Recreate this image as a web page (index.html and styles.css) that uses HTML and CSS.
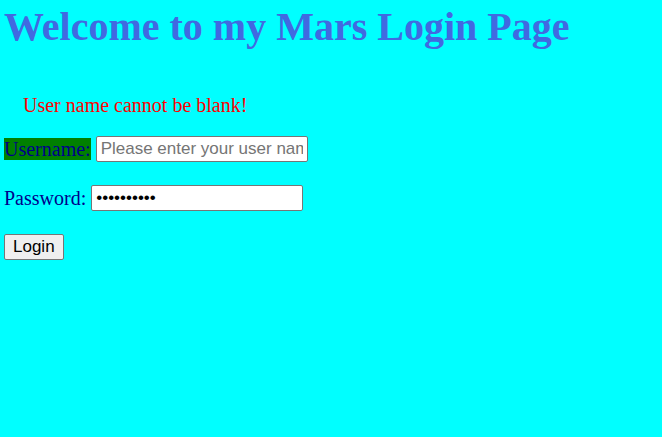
FILE: index.html
```html
<!DOCTYPE html>
<html>
<head>
<meta charset="utf-8">
<link rel="stylesheet" href="styles.css">
</head>
<body>
<h1 class="title">Welcome to my Mars Login Page</h1>
<form class="login">
  <div class="error">User name cannot be blank!</div>
  <div class="row row-first">
    <label class="label label-user" for="u">Username:</label>
    <input class="field field-user" id="u" type="text" placeholder="Please enter your user name">
  </div>
  <div class="row">
    <label class="label" for="p">Password:</label>
    <input class="field" id="p" type="password" value="1234567890">
  </div>
  <div class="row">
    <button class="btn" type="button">Login</button>
  </div>
</form>
</body>
</html>
```
FILE: styles.css
```css
html, body {
  background: #00ffff;
}
body {
  margin: 0;
  padding: 0 4px;
  font-family: "Liberation Serif", "Times New Roman", serif;
}
.title {
  margin: 0;
  padding-top: 4px;
  font-size: 40px;
  line-height: 46px;
  font-weight: bold;
  color: #4169e1;
}
.login {
  display: flex;
  flex-direction: column;
}
.error {
  margin: 44px 0 0 19px;
  font-size: 20px;
  line-height: 23px;
  color: #ff0000;
}
.row {
  display: flex;
  align-items: center;
  gap: 5px;
  height: 26px;
  margin-top: 23px;
}
.row-first {
  margin-top: 19px;
}
.label {
  font-size: 20px;
  line-height: 22px;
  color: #00008b;
}
.label-user {
  background: #008000;
}
.field {
  box-sizing: border-box;
  width: 212px;
  height: 26px;
  border: 1px solid #767676;
  border-radius: 2px;
  padding: 1px 4px;
  font-family: "Liberation Sans", Arial, sans-serif;
  font-size: 17px;
  background: #fff;
}
.field::placeholder {
  color: #757575;
}
.btn {
  box-sizing: border-box;
  height: 26px;
  padding: 1px 8px;
  font-family: "Liberation Sans", Arial, sans-serif;
  font-size: 17px;
  background: #efefef;
  border: 1px solid #767676;
  border-radius: 2px;
  color: #000;
}
```
